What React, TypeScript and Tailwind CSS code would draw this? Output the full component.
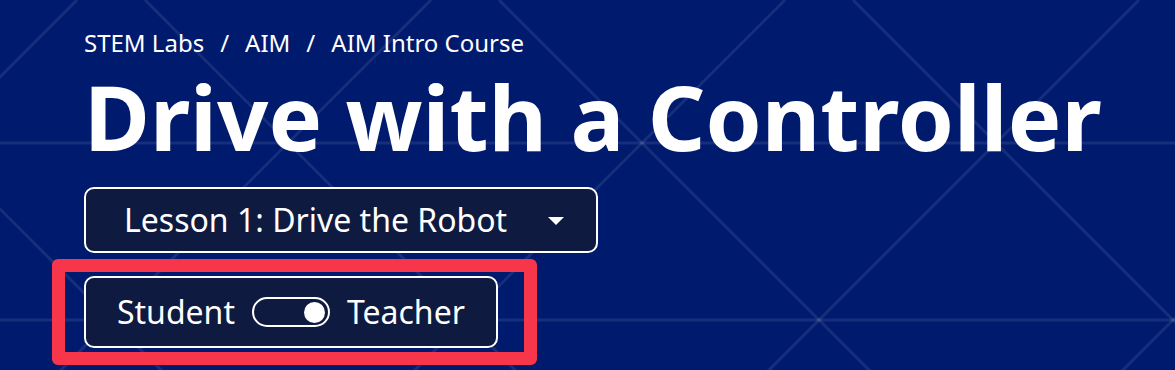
import { useState } from "react";

const DOWN_LINES = [-209, 145, 499, 853];
const UP_LINES = [77, 431, 785, 1139, 1493];
const ROWS = [143, 320];

function GridBackdrop() {
  return (
    <svg
      className="pointer-events-none absolute inset-0 h-full w-full"
      viewBox="0 0 1175 370"
      preserveAspectRatio="none"
    >
      <g stroke="rgba(255,255,255,0.09)" strokeWidth={3}>
        {ROWS.map((y) => (
          <line key={`h${y}`} x1={0} y1={y} x2={1175} y2={y} />
        ))}
        {/* x - y = c */}
        {DOWN_LINES.map((c) => (
          <line key={`d${c}`} x1={c} y1={0} x2={c + 400} y2={400} />
        ))}
        {/* x + y = c */}
        {UP_LINES.map((c) => (
          <line key={`u${c}`} x1={c} y1={0} x2={c - 400} y2={400} />
        ))}
      </g>
    </svg>
  );
}

function Breadcrumbs({ items }: { items: string[] }) {
  return (
    <nav className="flex items-center text-[24px] leading-none text-white">
      {items.map((item, index) => (
        <span key={item} className="flex items-center">
          {index > 0 ? <span className="mx-[16px]">/</span> : null}
          <span>{item}</span>
        </span>
      ))}
    </nav>
  );
}

function LessonSelect() {
  return (
    <button
      type="button"
      className="flex h-[66px] w-[514px] items-center justify-between rounded-[10px] border-2 border-white bg-[#0e1a3f] pl-[38px] pr-[32px] text-[32px] leading-none text-white"
    >
      <span>Lesson 1: Drive the Robot</span>
      <svg width="16" height="8" viewBox="0 0 16 8" className="mt-[1px]">
        <path d="M0 0 H16 L8 8 Z" fill="white" />
      </svg>
    </button>
  );
}

function RoleToggle() {
  const [teacher, setTeacher] = useState(true);
  return (
    <div className="relative w-fit">
      <div className="flex h-[72px] items-center rounded-[10px] border-2 border-white bg-[#0e1a3f] px-[31px] text-[32px] leading-none text-white">
        <span>Student</span>
        <button
          type="button"
          onClick={() => setTeacher(!teacher)}
          className={`mx-[17px] flex h-[30px] w-[78px] items-center rounded-full border-2 border-white px-[3px] ${
            teacher ? "justify-end" : "justify-start"
          }`}
        >
          <span className="block h-[21px] w-[21px] rounded-full bg-white" />
        </button>
        <span>Teacher</span>
      </div>
      {/* annotation frame */}
      <div className="pointer-events-none absolute left-[-32px] top-[-17px] h-[106px] w-[485px] rounded-[6px] border-[13px] border-[#f7364b]" />
    </div>
  );
}

export default function App() {
  return (
    <div
      className="relative h-[370px] w-full overflow-hidden bg-[#001a6e] text-white"
      style={{ fontFamily: '"Noto Sans", "Open Sans", sans-serif' }}
    >
      <GridBackdrop />
      <div className="relative flex flex-col items-start pl-[84px] pt-[31px]">
        <Breadcrumbs items={["STEM Labs", "AIM", "AIM Intro Course"]} />
        <h1 className="mt-[16px] text-[90px] font-bold leading-none tracking-normal">
          Drive with a Controller
        </h1>
        <div className="mt-[26px]">
          <LessonSelect />
        </div>
        <div className="mt-[23px]">
          <RoleToggle />
        </div>
      </div>
    </div>
  );
}
